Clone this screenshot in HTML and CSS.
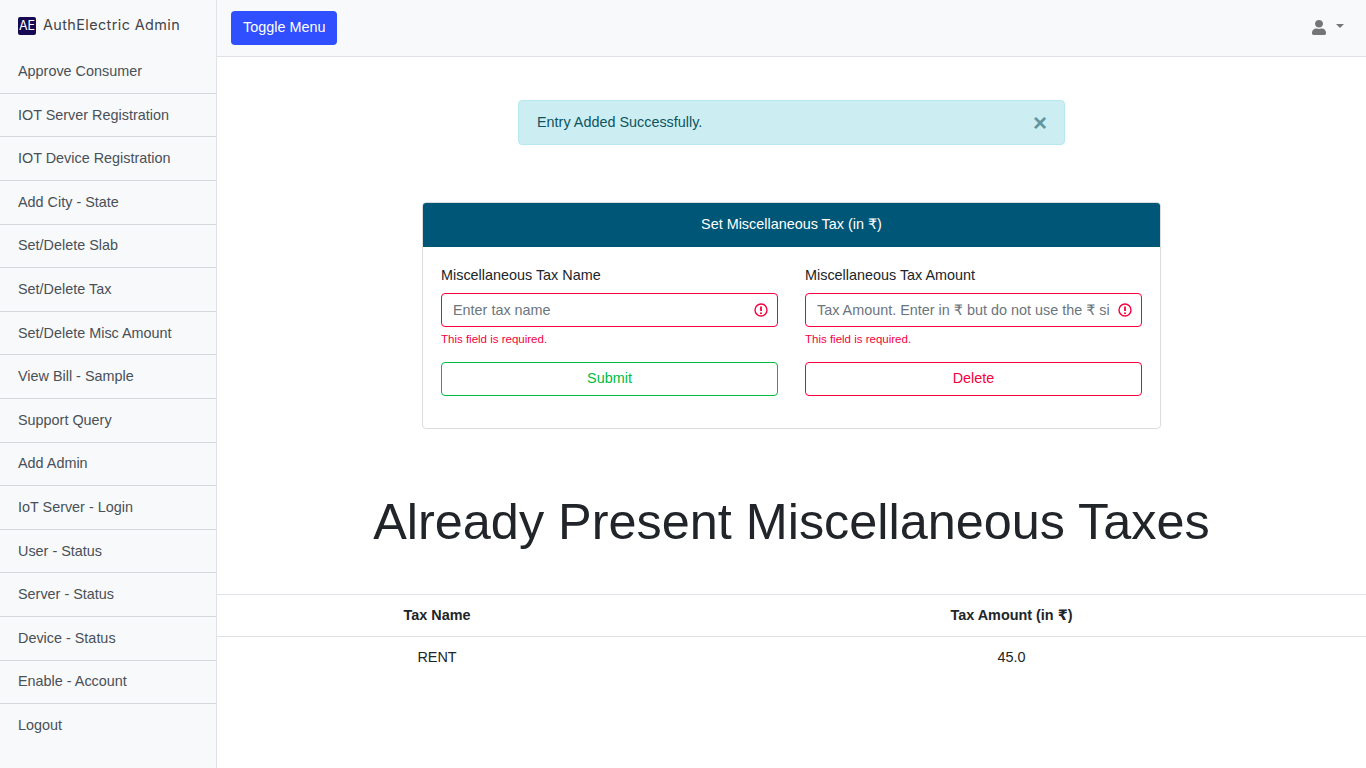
FILE: index.html
```html
<!DOCTYPE html>
<html>
<head>
    <meta charset="UTF-8">
    <meta name="viewport" content="width=device-width, initial-scale=1.0">
    <title>AuthElectric Admin</title>
    <link rel="stylesheet" href="styles.css">
</head>
<body>

<div class="wrapper">
    <nav class="sidebar">
        <div class="brand">
            <span class="brand-logo">AE</span>
            <span class="brand-name">AuthElectric Admin</span>
        </div>
        <ul class="side-menu">
            <li><a href="#">Approve Consumer</a></li>
            <li><a href="#">IOT Server Registration</a></li>
            <li><a href="#">IOT Device Registration</a></li>
            <li><a href="#">Add City - State</a></li>
            <li><a href="#">Set/Delete Slab</a></li>
            <li><a href="#">Set/Delete Tax</a></li>
            <li><a href="#">Set/Delete Misc Amount</a></li>
            <li><a href="#">View Bill - Sample</a></li>
            <li><a href="#">Support Query</a></li>
            <li><a href="#">Add Admin</a></li>
            <li><a href="#">IoT Server - Login</a></li>
            <li><a href="#">User - Status</a></li>
            <li><a href="#">Server - Status</a></li>
            <li><a href="#">Device - Status</a></li>
            <li><a href="#">Enable - Account</a></li>
            <li><a href="#">Logout</a></li>
        </ul>
    </nav>

    <div class="page">
        <header class="topbar">
            <button class="btn-toggle">Toggle Menu</button>
            <a href="#" class="user-menu">
                <svg width="14" height="15" viewBox="0 0 448 512" preserveAspectRatio="none" fill="#757575"><path d="M224 256c70.7 0 128-57.3 128-128S294.700 0 224 0 96 57.300 96 128s57.300 128 128 128zm89.600 32h-16.700c-22.200 10.200-46.900 16-72.900 16s-50.600-5.800-72.900-16h-16.700C60.200 288 0 348.200 0 422.400V464c0 26.500 21.500 48 48 48h352c26.500 0 48-21.500 48-48v-41.600c0-74.200-60.200-134.400-134.400-134.400z"/></svg>
                <span class="caret"></span>
            </a>
        </header>

        <main class="content">
            <div class="alert">
                <span>Entry Added Successfully.</span>
                <span class="alert-close">&times;</span>
            </div>

            <div class="card">
                <div class="card-header">Set Miscellaneous Tax (in ₹)</div>
                <form class="card-body">
                    <div class="field">
                        <label>Miscellaneous Tax Name</label>
                        <div class="input-wrap">
                            <input type="text" placeholder="Enter tax name">
                            <svg class="invalid-icon" width="14" height="14" viewBox="0 0 14 14" fill="none" stroke="#f5003d"><circle cx="7" cy="7" r="6" stroke-width="1.400"/><path d="M7 3.500v4.400" stroke-width="1.800"/><circle cx="7" cy="10.200" r="1" fill="#f5003d" stroke="none"/></svg>
                        </div>
                        <div class="error">This field is required.</div>
                        <button type="button" class="btn btn-submit">Submit</button>
                    </div>
                    <div class="field">
                        <label>Miscellaneous Tax Amount</label>
                        <div class="input-wrap">
                            <input type="text" placeholder="Tax Amount. Enter in ₹ but do not use the ₹ sign">
                            <svg class="invalid-icon" width="14" height="14" viewBox="0 0 14 14" fill="none" stroke="#f5003d"><circle cx="7" cy="7" r="6" stroke-width="1.400"/><path d="M7 3.500v4.400" stroke-width="1.800"/><circle cx="7" cy="10.200" r="1" fill="#f5003d" stroke="none"/></svg>
                        </div>
                        <div class="error">This field is required.</div>
                        <button type="button" class="btn btn-delete">Delete</button>
                    </div>
                </form>
            </div>

            <h1 class="title">Already Present Miscellaneous Taxes</h1>

            <table class="tax-table">
                <thead>
                    <tr>
                        <th>Tax Name</th>
                        <th>Tax Amount (in ₹)</th>
                    </tr>
                </thead>
                <tbody>
                    <tr>
                        <td>RENT</td>
                        <td>45.0</td>
                    </tr>
                </tbody>
            </table>
        </main>
    </div>
</div>

</body>
</html>
```

FILE: styles.css
```css
* {
    margin: 0;
    padding: 0;
    box-sizing: border-box;
}
body {
    font-family: "Liberation Sans", "DejaVu Sans", sans-serif;
    font-size: 14.4px;
    line-height: 1.5;
    color: #212529;
    background-color: #fff;
}
.wrapper {
    display: flex;
    min-height: 768px;
    height: 100vh;
    overflow: hidden;
}

/* sidebar */
.sidebar {
    width: 217px;
    flex-shrink: 0;
    background-color: #f8f9fa;
    border-right: 1px solid #dee2e6;
}
.brand {
    display: flex;
    align-items: center;
    gap: 7px;
    height: 50.2px;
    padding: 2px 0 0 18px;
}
.brand-logo {
    width: 18px;
    height: 18px;
    background-color: #170a52;
    color: #fff;
    border-radius: 2px;
    font-family: "Inter", sans-serif;
    font-size: 12.5px;
    line-height: 18px;
    text-align: center;
}
.brand-name {
    font-family: "Inter", sans-serif;
    font-size: 14.4px;
    letter-spacing: 0.4px;
    color: #3f4448;
    margin-top: -3px;
}
.side-menu {
    list-style: none;
}
.side-menu li {
    border-bottom: 1px solid #d5d8dc;
    height: 43.6px;
}
.side-menu li:last-child {
    border-bottom: none;
}
.side-menu a {
    display: block;
    padding: 10.8px 18px 10px;
    color: #495057;
    text-decoration: none;
}

/* top bar */
.page {
    flex: 1;
    min-width: 0;
}
.topbar {
    display: flex;
    align-items: center;
    justify-content: space-between;
    height: 57px;
    padding: 0 22px 0 14px;
    background-color: #f8f9fa;
    border-bottom: 1px solid #dee2e6;
}
.btn-toggle {
    height: 34px;
    padding: 0 12px 2px;
    border: none;
    border-radius: 4px;
    background-color: #304ffe;
    color: #fff;
    font-family: inherit;
    font-size: 14.4px;
}
.user-menu {
    display: flex;
    align-items: center;
    gap: 10px;
    margin-bottom: 2px;
}
.caret {
    border-top: 4.5px solid #757575;
    border-left: 4px solid transparent;
    border-right: 4px solid transparent;
    margin-bottom: 3px;
}

/* main */
.content {
    padding-top: 43px;
}
.alert {
    display: flex;
    justify-content: space-between;
    align-items: center;
    width: 547px;
    height: 45px;
    margin: 0 auto;
    padding: 0 17px 0 18px;
    background-color: #cceef3;
    border: 1px solid #b8e8ef;
    border-radius: 4px;
    color: #0c5460;
}
.alert-close {
    font-size: 24px;
    font-weight: bold;
    line-height: 1;
    color: #5f969f;
}
.card {
    width: 739px;
    height: 227px;
    margin: 57px auto 0;
    background-color: #fff;
    border: 1px solid #dcdcdc;
    border-radius: 4px;
}
.card-header {
    height: 44px;
    line-height: 42px;
    background-color: #005677;
    color: #fff;
    text-align: center;
    border-radius: 3px 3px 0 0;
}
.card-body {
    display: grid;
    grid-template-columns: 337px 337px;
    column-gap: 27px;
    padding: 18px 18px 17px;
}
.field label {
    display: block;
    margin-bottom: 6px;
}
.input-wrap {
    position: relative;
}
.input-wrap input {
    display: block;
    width: 100%;
    height: 34px;
    padding: 0 32px 0 11px;
    border: 1px solid #f5003d;
    border-radius: 4px;
    font-family: inherit;
    font-size: 14.4px;
    color: #495057;
}
.input-wrap input::placeholder {
    color: #6c757d;
    opacity: 1;
}
.invalid-icon {
    position: absolute;
    top: 10px;
    right: 10px;
}
.error {
    margin-top: 4px;
    font-size: 11.5px;
    line-height: 17px;
    color: #f5003d;
}
.btn {
    display: block;
    width: 100%;
    height: 34px;
    margin-top: 14px;
    padding-bottom: 2px;
    background-color: #fff;
    border-radius: 4px;
    font-family: inherit;
    font-size: 14.4px;
}
.btn-submit {
    border: 1px solid #00bc3f;
    color: #00bc3f;
}
.btn-delete {
    border: 1px solid #f5003d;
    color: #f5003d;
}
.title {
    margin-top: 62.5px;
    font-size: 50.4px;
    font-weight: 400;
    line-height: 1.2;
    text-align: center;
    color: #212529;
}
.tax-table {
    width: 100%;
    margin-top: 42.5px;
    border-collapse: collapse;
    text-align: center;
}
.tax-table th, .tax-table td {
    height: 42px;
    border-top: 1px solid #dee2e6;
    vertical-align: middle;
}
.tax-table th:first-child {
    width: 440px;
}
```
